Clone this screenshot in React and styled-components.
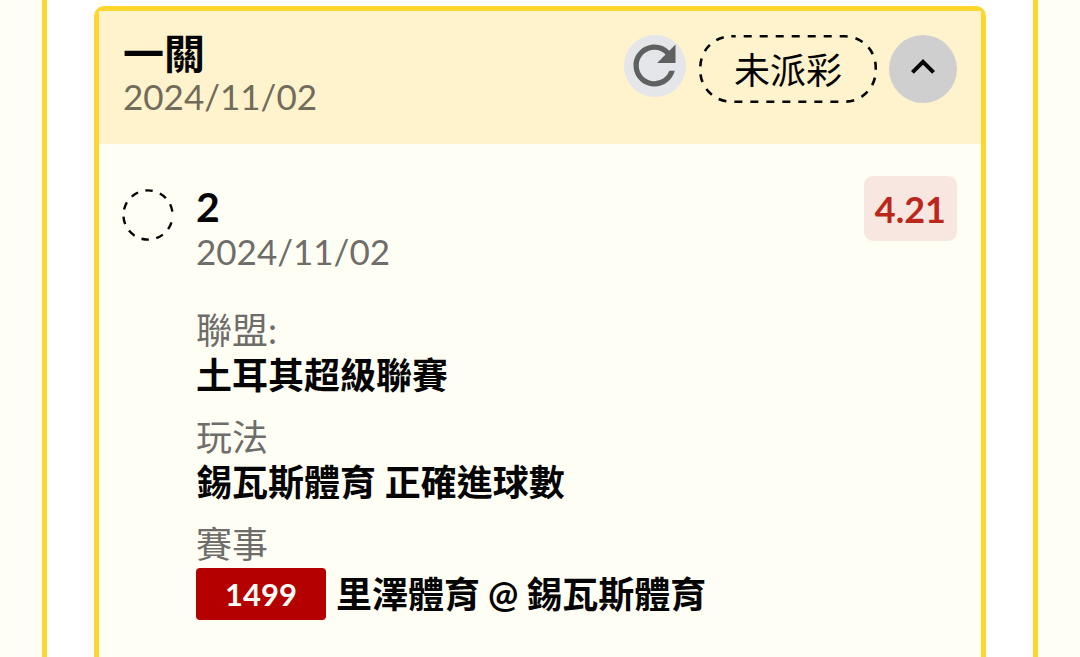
import React from "react";
import styled, { createGlobalStyle } from "styled-components";
import { MdRefresh, MdKeyboardArrowUp } from "react-icons/md";

const GlobalStyle = createGlobalStyle`
  *, *::before, *::after { box-sizing: border-box; }
  html { background: #fffef5; }
  body {
    margin: 0;
    color: #050505;
    font-family: Lato, "Noto Sans CJK TC", sans-serif;
    font-size: 36px;
    line-height: 44px;
  }
  h2, h3, p, dl, dd { margin: 0; }
`;

const Page = styled.main`
  display: flex;
  min-height: 100vh;
  padding: 0 42px;
`;

const Panel = styled.section`
  flex: 1;
  display: flex;
  padding: 6px 47px 0;
  background: #ffffff;
  border: solid #fdd62e;
  border-width: 0 5px;
`;

const Card = styled.article`
  flex: 1;
  min-width: 0;
  background: #fffef5;
  border: 5px solid #fdd62e;
  border-bottom: 0;
  border-radius: 10px 10px 0 0;
`;

const CardHeader = styled.header`
  display: flex;
  justify-content: space-between;
  align-items: flex-start;
  padding: 23px 24px 26px;
  background: #fef3cd;
`;

const Heading = styled.h2`
  font-size: 41px;
  font-weight: 700;
  line-height: 40px;
`;

const DateText = styled.time`
  display: block;
  color: ${(p) => (p.$onHeader ? "#716b5a" : "#6e6d69")};
  font-size: 35px;
`;

const Controls = styled.div`
  display: flex;
  align-items: flex-start;
  padding-top: 1px;
`;

const RoundButton = styled.button`
  display: flex;
  align-items: center;
  justify-content: center;
  width: ${(p) => p.$size}px;
  height: ${(p) => p.$size}px;
  padding: 0 0 ${(p) => p.$lift}px;
  border: 0;
  border-radius: 50%;
  color: ${(p) => p.$color};
  background: ${(p) => p.$bg};
  cursor: pointer;

  svg { flex: none; }
`;

const StatusPill = styled.span`
  position: relative;
  display: flex;
  align-items: center;
  height: 68px;
  margin: 0 12px 0 13px;
  padding: 2px 35px 0;
`;

const PillOutline = styled.svg`
  position: absolute;
  inset: 0;
  width: 100%;
  height: 100%;
`;

const Bet = styled.div`
  display: flex;
  align-items: flex-start;
  padding: 32px 24px;
`;

const Marker = styled.svg`
  flex: none;
  margin: 12px 21px 0 -2px;
`;

const BetBody = styled.div`
  flex: 1;
  padding-top: 9px;
`;

const BetTitle = styled(Heading).attrs({ as: "h3" })`
  line-height: 44px;
`;

const Odds = styled.strong`
  padding: 11px 11px 10px;
  border-radius: 9px;
  color: #bb271c;
  background: #f8e7e0;
  font-weight: 700;
`;

const Fields = styled.dl`
  display: grid;
  gap: 17px;
  padding-top: 35px;
`;

const Label = styled.dt`
  color: #6e6d69;
`;

const Value = styled.dd`
  display: flex;
  align-items: center;
  min-height: 46px;
  font-weight: 700;
`;

const MatchValue = styled(Value)`
  gap: 8px;
  padding-top: 2px;
`;

const MatchCode = styled.span`
  margin-right: 2px;
  padding: 4px 29px;
  border-radius: 4px;
  color: #fffdf5;
  background: #b50000;
  font-size: 31px;
`;

export default function App() {
  return (
    <>
      <GlobalStyle />
      <Page>
        <Panel>
          <Card>
            <CardHeader>
              <div>
                <Heading>一關</Heading>
                <DateText $onHeader dateTime="2024-11-02">2024/11/02</DateText>
              </div>
              <Controls>
                <RoundButton type="button" aria-label="重新整理" $size={62} $lift={2} $color="#5f6060" $bg="#e5e6e9">
                  <MdRefresh size={63} />
                </RoundButton>
                <StatusPill>
                  <PillOutline viewBox="0 0 178 68" aria-hidden="true">
                    <rect x="1.3" y="1.3" width="175.4" height="65.4" rx="31" fill="none" stroke="#050505" strokeWidth="2.6" strokeDasharray="8" strokeDashoffset="3.6" />
                  </PillOutline>
                  未派彩
                </StatusPill>
                <RoundButton type="button" aria-label="收合" aria-expanded="true" $size={68} $lift={4} $color="#050505" $bg="#cfcfcf">
                  <MdKeyboardArrowUp size={48} />
                </RoundButton>
              </Controls>
            </CardHeader>
            <Bet>
              <Marker width="54" height="54" viewBox="0 0 54 54" aria-hidden="true">
                <circle cx="27" cy="27" r="24.6" fill="none" stroke="#050505" strokeWidth="2.4" strokeDasharray="7.5" strokeDashoffset="7.5" />
              </Marker>
              <BetBody>
                <BetTitle>2</BetTitle>
                <DateText dateTime="2024-11-02">2024/11/02</DateText>
                <Fields>
                  <div>
                    <Label>聯盟:</Label>
                    <Value>土耳其超級聯賽</Value>
                  </div>
                  <div>
                    <Label>玩法</Label>
                    <Value>錫瓦斯體育 正確進球數</Value>
                  </div>
                  <div>
                    <Label>賽事</Label>
                    <MatchValue>
                      <MatchCode>1499</MatchCode>
                      <span>里澤體育</span>
                      <span>@</span>
                      <span>錫瓦斯體育</span>
                    </MatchValue>
                  </div>
                </Fields>
              </BetBody>
              <Odds>4.21</Odds>
            </Bet>
          </Card>
        </Panel>
      </Page>
    </>
  );
}
